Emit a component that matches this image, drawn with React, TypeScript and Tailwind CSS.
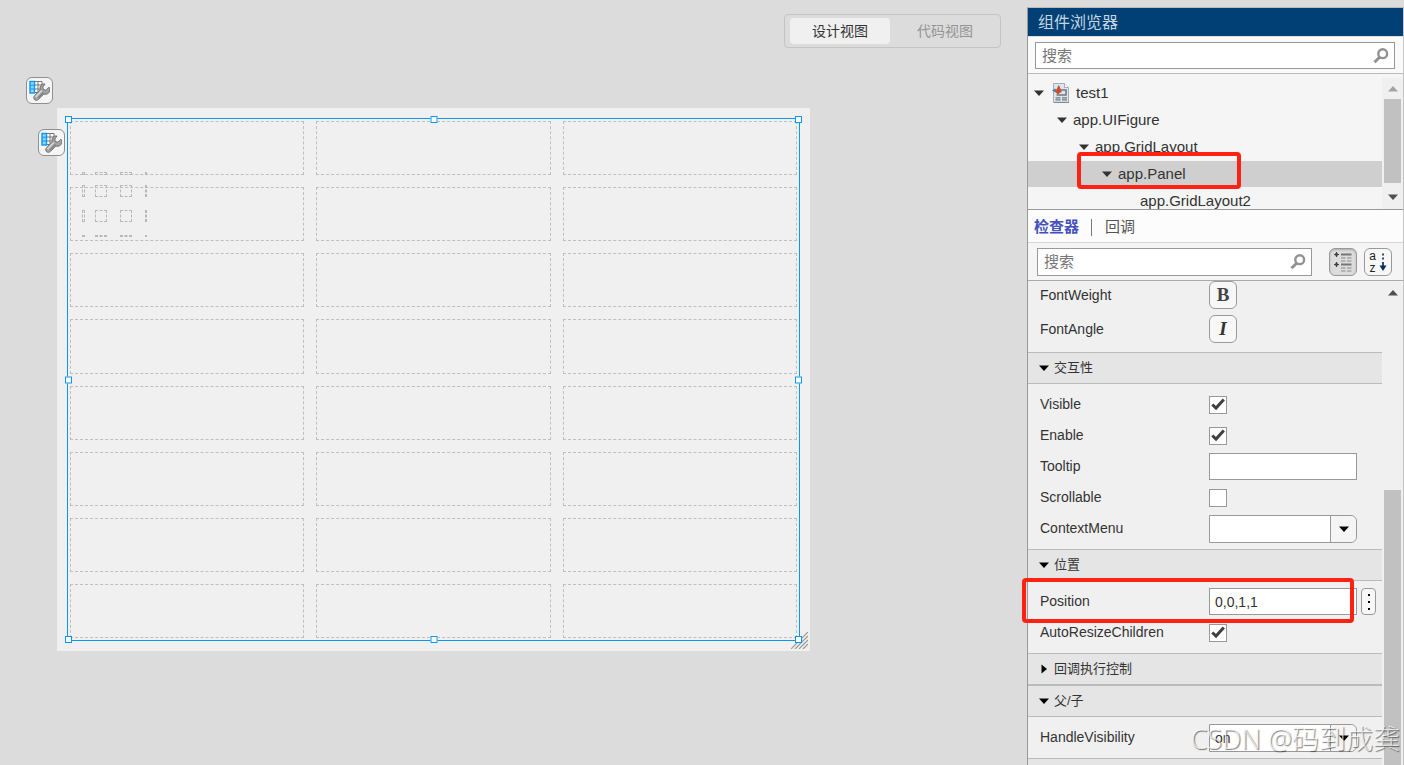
import { useState } from "react";
import type { ReactNode } from "react";

const cells = Array.from({ length: 24 }, (_, i) => i);

const handles = [
  "-left-[3px] -top-[3px]",
  "left-1/2 -top-[3px] -translate-x-1/2",
  "-right-[3px] -top-[3px]",
  "-left-[3px] top-1/2 -translate-y-1/2",
  "-right-[3px] top-1/2 -translate-y-1/2",
  "-left-[3px] -bottom-[3px]",
  "left-1/2 -bottom-[3px] -translate-x-1/2",
  "-right-[3px] -bottom-[3px]",
];

const miniWidths = ["w-[3px]", "w-3", "w-3", "w-[2px]"];
const miniHeights = ["h-[3px]", "h-3", "h-3", "h-[2px]"];

function Triangle({ dir = "down", className = "" }: { dir?: "down" | "up" | "right"; className?: string }) {
  const d = { down: "M0 2.5h10L5 8z", up: "M0 7.5h10L5 2z", right: "M2.5 0.5v9L8 5z" }[dir];
  return (
    <svg viewBox="0 0 10 10" className={`h-[10px] w-[10px] shrink-0 ${className}`} fill="currentColor">
      <path d={d} />
    </svg>
  );
}

function SearchIcon() {
  return (
    <svg viewBox="0 0 16 16" className="h-4 w-4 shrink-0" fill="none" stroke="#929292">
      <circle cx="9.7" cy="5.7" r="4.4" strokeWidth="2.4" />
      <path d="M6.6 9.2L1.5 14.3" strokeWidth="3" />
    </svg>
  );
}

function GridToolIcon() {
  return (
    <svg viewBox="0 0 21 21" className="h-[21px] w-[21px]">
      <rect x="1" y="1" width="12" height="12" fill="#fff" />
      <path d="M5.5 1.5h7.5v11M5.5 5h7.5M5.5 9h7.5M9 1.5v11M5.5 12.5h7.5" fill="none" stroke="#777" />
      <rect x="1" y="1.5" width="4.500" height="11.500" fill="#8fd6ff" stroke="#0a96f5" strokeWidth="1.4" />
      <path d="M1 5.200h4.500M1 9h4.500" stroke="#0a96f5" />
      <path
        d="M16 4c-3.300-.6-5.800 2-4.700 5.400l-5.500 6c-1.400 1.300-1.300 3.300-.2 4.300 1.200 1 3 .8 4-.4l5.200-5.300c3.300 1 6-1 6-4.300 0-1.100-.3-1.900-.8-2.500L17 10.200l-2.700-.7-.5-2.500z"
        fill="#a3a3a3"
        stroke="#696969"
        strokeWidth="0.9"
      />
      <path d="M12.800 10.500l-6.300 6.600" stroke="#d6d6d6" strokeWidth="1.6" />
      <path d="M14.500 12.500l-5.300 5.300" stroke="#7d7d7d" strokeWidth="1.2" />
    </svg>
  );
}

function AppFileIcon() {
  return (
    <svg viewBox="0 0 18 20" className="h-5 w-[18px] shrink-0">
      <path d="M1.5.5h11l4 4v15h-15z" fill="#dfe5ec" stroke="#a7adb3" />
      <path d="M12.5.5v4h4" fill="#fff" stroke="#a7adb3" />
      <path d="M2 19.4h15" stroke="#7d8790" />
      <path d="M8 7h6v5H4.500" fill="none" stroke="#707a84" strokeWidth="1.6" />
      <path d="M3.500 14.800h5M10 14.800h5M3.500 16.800h5M10 16.800h5" stroke="#707a84" strokeWidth="1.3" />
      <path d="M0 7.500l3-2 2.500 2-2 2z" fill="#4e83ad" />
      <path d="M3 8.500c1.500-1 2.300-4.500 3.700-6.500 1.500 2 2.300 5.500 3.300 7.500-1.500-.5-2.500.5-4 2.300z" fill="#c9512b" />
    </svg>
  );
}

function ToolButton({ label, className }: { label: string; className: string }) {
  return (
    <button
      aria-label={label}
      className={`absolute grid h-[27px] w-[27px] place-items-center rounded-md border border-[#8f8f8f] bg-[#f5f5f5] ${className}`}
    >
      <GridToolIcon />
    </button>
  );
}

function Canvas() {
  return (
    <div className="relative mt-[60px] mr-[217px] ml-[57px] h-[543px] bg-[#f0f0f0] p-[10px]">
      <ToolButton label="UIFigure" className="-top-[31px] -left-[31px]" />
      <ToolButton label="GridLayout" className="top-[21px] -left-[19px]" />
      <svg viewBox="0 0 17 17" className="absolute right-[2px] bottom-[2px] h-[17px] w-[17px]" stroke="#999" strokeWidth="1.2">
        <path d="M0 17L17 0M4 17L17 4M8 17L17 8M12 17L17 12" />
      </svg>
      <div className="relative h-full border border-[#0a96f5] p-[2px]">
        <div className="grid h-full grid-cols-3 grid-rows-8 gap-3">
          {cells.map((i) => (
            <div key={i} className="border border-dashed border-[#bfbfbf]" />
          ))}
        </div>
        <div className="absolute top-[53px] left-[14px] grid grid-cols-[13px_25px_25px_2px] grid-rows-[13px_25px_25px_2px]">
          {miniHeights.map((h, r) =>
            miniWidths.map((w, c) => (
              <div key={`${r}-${c}`} className={`border border-dashed border-[#b8b8b8] ${w} ${h}`} />
            ))
          )}
        </div>
        {handles.map((pos) => (
          <span key={pos} className={`absolute h-[7px] w-[7px] border border-[#0a96f5] bg-white ${pos}`} />
        ))}
      </div>
    </div>
  );
}

function SearchBox({ id, className = "" }: { id: string; className?: string }) {
  return (
    <div className={`flex items-center border border-[#999] bg-white pr-[5px] pl-[6px] ${className}`}>
      <input
        id={id}
        type="search"
        aria-label="搜索"
        placeholder="搜索"
        className="min-w-0 flex-1 text-[15px] leading-5 outline-none placeholder:text-[#777]"
      />
      <SearchIcon />
    </div>
  );
}

function TreeRow({ name, indent, icon, leaf, selected, children }: {
  name: string;
  indent: string;
  icon?: ReactNode;
  leaf?: boolean;
  selected?: boolean;
  children?: ReactNode;
}) {
  return (
    <li className={`relative flex h-[26px] shrink-0 items-center ${indent} ${selected ? "bg-[#cfcfcf]" : ""}`}>
      {!leaf && <Triangle className="mr-[6px] text-[#333]" />}
      {icon}
      <span>{name}</span>
      {children}
    </li>
  );
}

function Section({ title, open = true, children }: { title: string; open?: boolean; children?: ReactNode }) {
  return (
    <section>
      <h3>
        <button className="flex h-8 w-full items-center gap-[5px] border-y border-[#bbb] bg-[#e5e5e5] pl-[11px] text-[13px] leading-4 text-[#333]">
          <Triangle dir={open ? "down" : "right"} className="text-black" />
          {title}
        </button>
      </h3>
      {open && <div className="py-[5px]">{children}</div>}
    </section>
  );
}

function Row({ label, htmlFor, children }: { label: string; htmlFor: string; children: ReactNode }) {
  return (
    <div className="relative flex h-[31px] items-center pl-3">
      <label htmlFor={htmlFor} className="w-[169px] shrink-0 pb-[2px]">
        {label}
      </label>
      {children}
    </div>
  );
}

function CheckRow({ label, checked = false }: { label: string; checked?: boolean }) {
  const [on, setOn] = useState(checked);
  return (
    <Row label={label} htmlFor={label}>
      <span className="relative h-[18px] w-[18px]">
        <input
          id={label}
          type="checkbox"
          checked={on}
          onChange={() => setOn(!on)}
          className="peer block h-full w-full appearance-none border border-[#999] bg-white"
        />
        <svg
          viewBox="0 0 18 18"
          className="pointer-events-none absolute inset-0 hidden h-full w-full peer-checked:block"
          fill="none"
          stroke="#404040"
          strokeWidth="3"
        >
          <path d="M3.300 8.500L7 12L14.800 3.500" />
        </svg>
      </span>
    </Row>
  );
}

function SelectRow({ label, value }: { label: string; value: string }) {
  return (
    <Row label={label} htmlFor={label}>
      <span className="relative mr-[25px] h-7 min-w-0 flex-1">
        <select
          id={label}
          defaultValue={value}
          className="h-full w-full appearance-none rounded-r-md border border-[#999] bg-white pl-[5px]"
        >
          <option>{value}</option>
        </select>
        <span className="pointer-events-none absolute inset-y-px right-px grid w-[26px] place-items-center rounded-r-md border-l border-[#999] bg-[#f5f5f5] text-black">
          <Triangle />
        </span>
      </span>
    </Row>
  );
}

function Browser() {
  return (
    <>
      <h2 className="h-[29px] shrink-0 border-b border-[#ddd] bg-[#004074] pl-[10px] text-base leading-[30px] text-[#c6d5e2]">
        组件浏览器
      </h2>
      <div className="shrink-0 border-b border-[#bbb] bg-[#fafafa] pt-[5px] pr-2 pb-1 pl-[7px]">
        <SearchBox id="component-search" className="h-[27px]" />
      </div>
      <div className="flex h-[135px] shrink-0 overflow-hidden bg-[#f5f5f5] text-[15px] leading-[18px]">
        <ul className="flex flex-1 flex-col gap-px pt-[6px]">
          <TreeRow
            name="test1"
            indent="pl-[6px]"
            icon={<span className="mr-[6px] ml-[2px]"><AppFileIcon /></span>}
          />
          <TreeRow name="app.UIFigure" indent="pl-[29px]" />
          <TreeRow name="app.GridLayout" indent="pl-[51px]" />
          <TreeRow name="app.Panel" indent="pl-[74px]" selected>
            <span className="absolute -top-[9px] -bottom-[2px] left-[49px] z-10 w-[164px] rounded border-4 border-[#ff2112]" />
          </TreeRow>
          <TreeRow name="app.GridLayout2" indent="pl-[112px]" leaf />
        </ul>
        <div className="mt-1 flex w-[21px] flex-col items-center bg-[#f0f0f0] pt-[6px]">
          <Triangle dir="up" className="text-[#a3a3a3]" />
          <div className="mt-[5px] h-[84px] w-[17px] bg-[#c1c1c1]" />
          <Triangle className="mt-[9px] text-[#505050]" />
        </div>
      </div>
    </>
  );
}

function Inspector() {
  return (
    <>
      <div className="flex h-[34px] shrink-0 items-center border-t border-b border-t-[#999] border-b-[#d5d5d5] bg-[#fcfcfc] pt-[2px] pl-[6px] text-[15px] leading-5">
        <button className="font-bold text-[#4350bd]">检查器</button>
        <span className="mr-[13px] ml-3 h-[17px] w-px bg-[#777]" />
        <button className="text-[#555]">回调</button>
      </div>
      <div className="flex shrink-0 items-center border-b border-[#aaa] bg-[#f5f5f5] pt-[5px] pr-[11px] pb-1 pl-[9px]">
        <SearchBox id="property-search" className="h-7 min-w-0 flex-1" />
        <button
          aria-label="按类别"
          className="ml-[17px] h-7 w-7 rounded-md border border-[#999] bg-[#dcdcdc] shadow-[inset_0_1px_2px_#aaa]"
        >
          <svg viewBox="0 0 26 26" className="h-full w-full" stroke="#8a8a8a" strokeWidth="1.2">
            <path d="M11 5.500h10.500M11 15.500h10.500" stroke="#777" strokeWidth="2" />
            <path d="M11 9h4.500M17 9h4.500M11 12h4.500M17 12h4.500M11 19h4.500M17 19h4.500M11 22h4.500M17 22h4.500" />
            <path d="M4 5.500h5M6.500 3v5M4 15.500h5M6.500 13v5" stroke="#444" />
            <path d="M5.200 5.500h2.600M5.200 15.500h2.600" stroke="#444" strokeWidth="2.600" />
          </svg>
        </button>
        <button
          aria-label="按字母"
          className="ml-[7px] flex h-7 w-7 items-center justify-center gap-[3px] rounded-md border border-[#999] bg-[#f7f7f7]"
        >
          <span className="flex flex-col text-xs leading-3 text-[#222]">
            <span>a</span>
            <span>z</span>
          </span>
          <svg viewBox="0 0 8 20" className="h-5 w-2" stroke="#123f68" strokeWidth="1.800">
            <path d="M4 1.500v2M4 5.500v2M4 10v6" />
            <path d="M.5 13.500h7L4 19z" fill="#0b3157" stroke="none" />
          </svg>
        </button>
      </div>
      <div className="flex min-h-0 flex-1 bg-[#f0f0f0] text-sm leading-4">
        <div className="min-w-0 flex-1">
          <div className="flex flex-col gap-[6px] pb-[9px] pl-3">
            <div className="flex h-7 items-center">
              <label htmlFor="font-weight" className="w-[169px]">FontWeight</label>
              <button id="font-weight" className="h-7 w-7 rounded-md border border-[#999] bg-[#f7f7f7] font-['Liberation_Serif',serif] text-[19px] leading-6 font-bold text-[#444]">
                B
              </button>
            </div>
            <div className="flex h-7 items-center">
              <label htmlFor="font-angle" className="w-[169px]">FontAngle</label>
              <button id="font-angle" className="h-7 w-7 rounded-md border border-[#999] bg-[#f7f7f7] font-['Liberation_Serif',serif] text-[19px] leading-6 font-bold italic">
                I
              </button>
            </div>
          </div>
          <Section title="交互性">
            <CheckRow label="Visible" checked />
            <CheckRow label="Enable" checked />
            <Row label="Tooltip" htmlFor="tooltip">
              <input id="tooltip" type="text" className="mr-[25px] h-[27px] min-w-0 flex-1 border border-[#999] bg-white px-[6px]" />
            </Row>
            <CheckRow label="Scrollable" />
            <SelectRow label="ContextMenu" value="" />
          </Section>
          <Section title="位置">
            <Row label="Position" htmlFor="position">
              <input
                id="position"
                type="text"
                defaultValue="0,0,1,1"
                className="h-[27px] min-w-0 flex-1 border border-[#999] bg-white px-[5px]"
              />
              <button
                aria-label="更多"
                className="mr-[6px] ml-1 flex h-[27px] w-[15px] shrink-0 flex-col items-center justify-center gap-[5px] rounded border border-[#999] bg-[#f7f7f7]"
              >
                <span className="h-[2px] w-[2px] bg-black" />
                <span className="h-[2px] w-[2px] bg-black" />
                <span className="h-[2px] w-[2px] bg-black" />
              </button>
              <span className="pointer-events-none absolute -top-2 right-7 -bottom-[6px] -left-[6px] rounded border-4 border-[#ff2112]" />
            </Row>
            <CheckRow label="AutoResizeChildren" checked />
          </Section>
          <Section title="回调执行控制" open={false} />
          <Section title="父/子">
            <SelectRow label="HandleVisibility" value="on" />
          </Section>
          <div className="h-8 border-t border-[#bbb] bg-[#e5e5e5]" />
        </div>
        <div className="flex w-[21px] shrink-0 flex-col items-center pt-[7px]">
          <Triangle dir="up" className="text-[#505050]" />
          <div className="mt-[192px] w-[17px] flex-1 bg-[#c1c1c1]" />
        </div>
      </div>
    </>
  );
}

export default function App() {
  return (
    <div className="relative flex h-screen overflow-hidden bg-[#dcdcdc] font-['Liberation_Sans','Noto_Sans_CJK_SC',sans-serif] text-[#333]">
      <main className="flex min-w-0 flex-1 flex-col pt-[14px]">
        <div className="mr-[26px] flex h-[34px] items-center self-end rounded border border-[#c4c4c4] pl-[5px] text-sm leading-5">
          <button className="h-[26px] w-[100px] rounded-sm bg-[#f0f0f0]">设计视图</button>
          <button className="h-[26px] w-[110px] text-[#949494]">代码视图</button>
        </div>
        <Canvas />
      </main>
      <aside className="mt-[7px] flex w-[377px] shrink-0 flex-col border-t border-r border-l border-t-[#bbb] border-r-[#c5c5c5] border-l-[#999]">
        <Browser />
        <Inspector />
      </aside>
      <div className="pointer-events-none absolute right-1 bottom-2 font-['Noto_Sans','Noto_Sans_CJK_SC',sans-serif] text-[27px] leading-9 font-light whitespace-nowrap text-white/70 [text-shadow:1px_1px_1px_rgba(0,0,0,0.5)]">
        CSDN @码到成龚
      </div>
    </div>
  );
}
